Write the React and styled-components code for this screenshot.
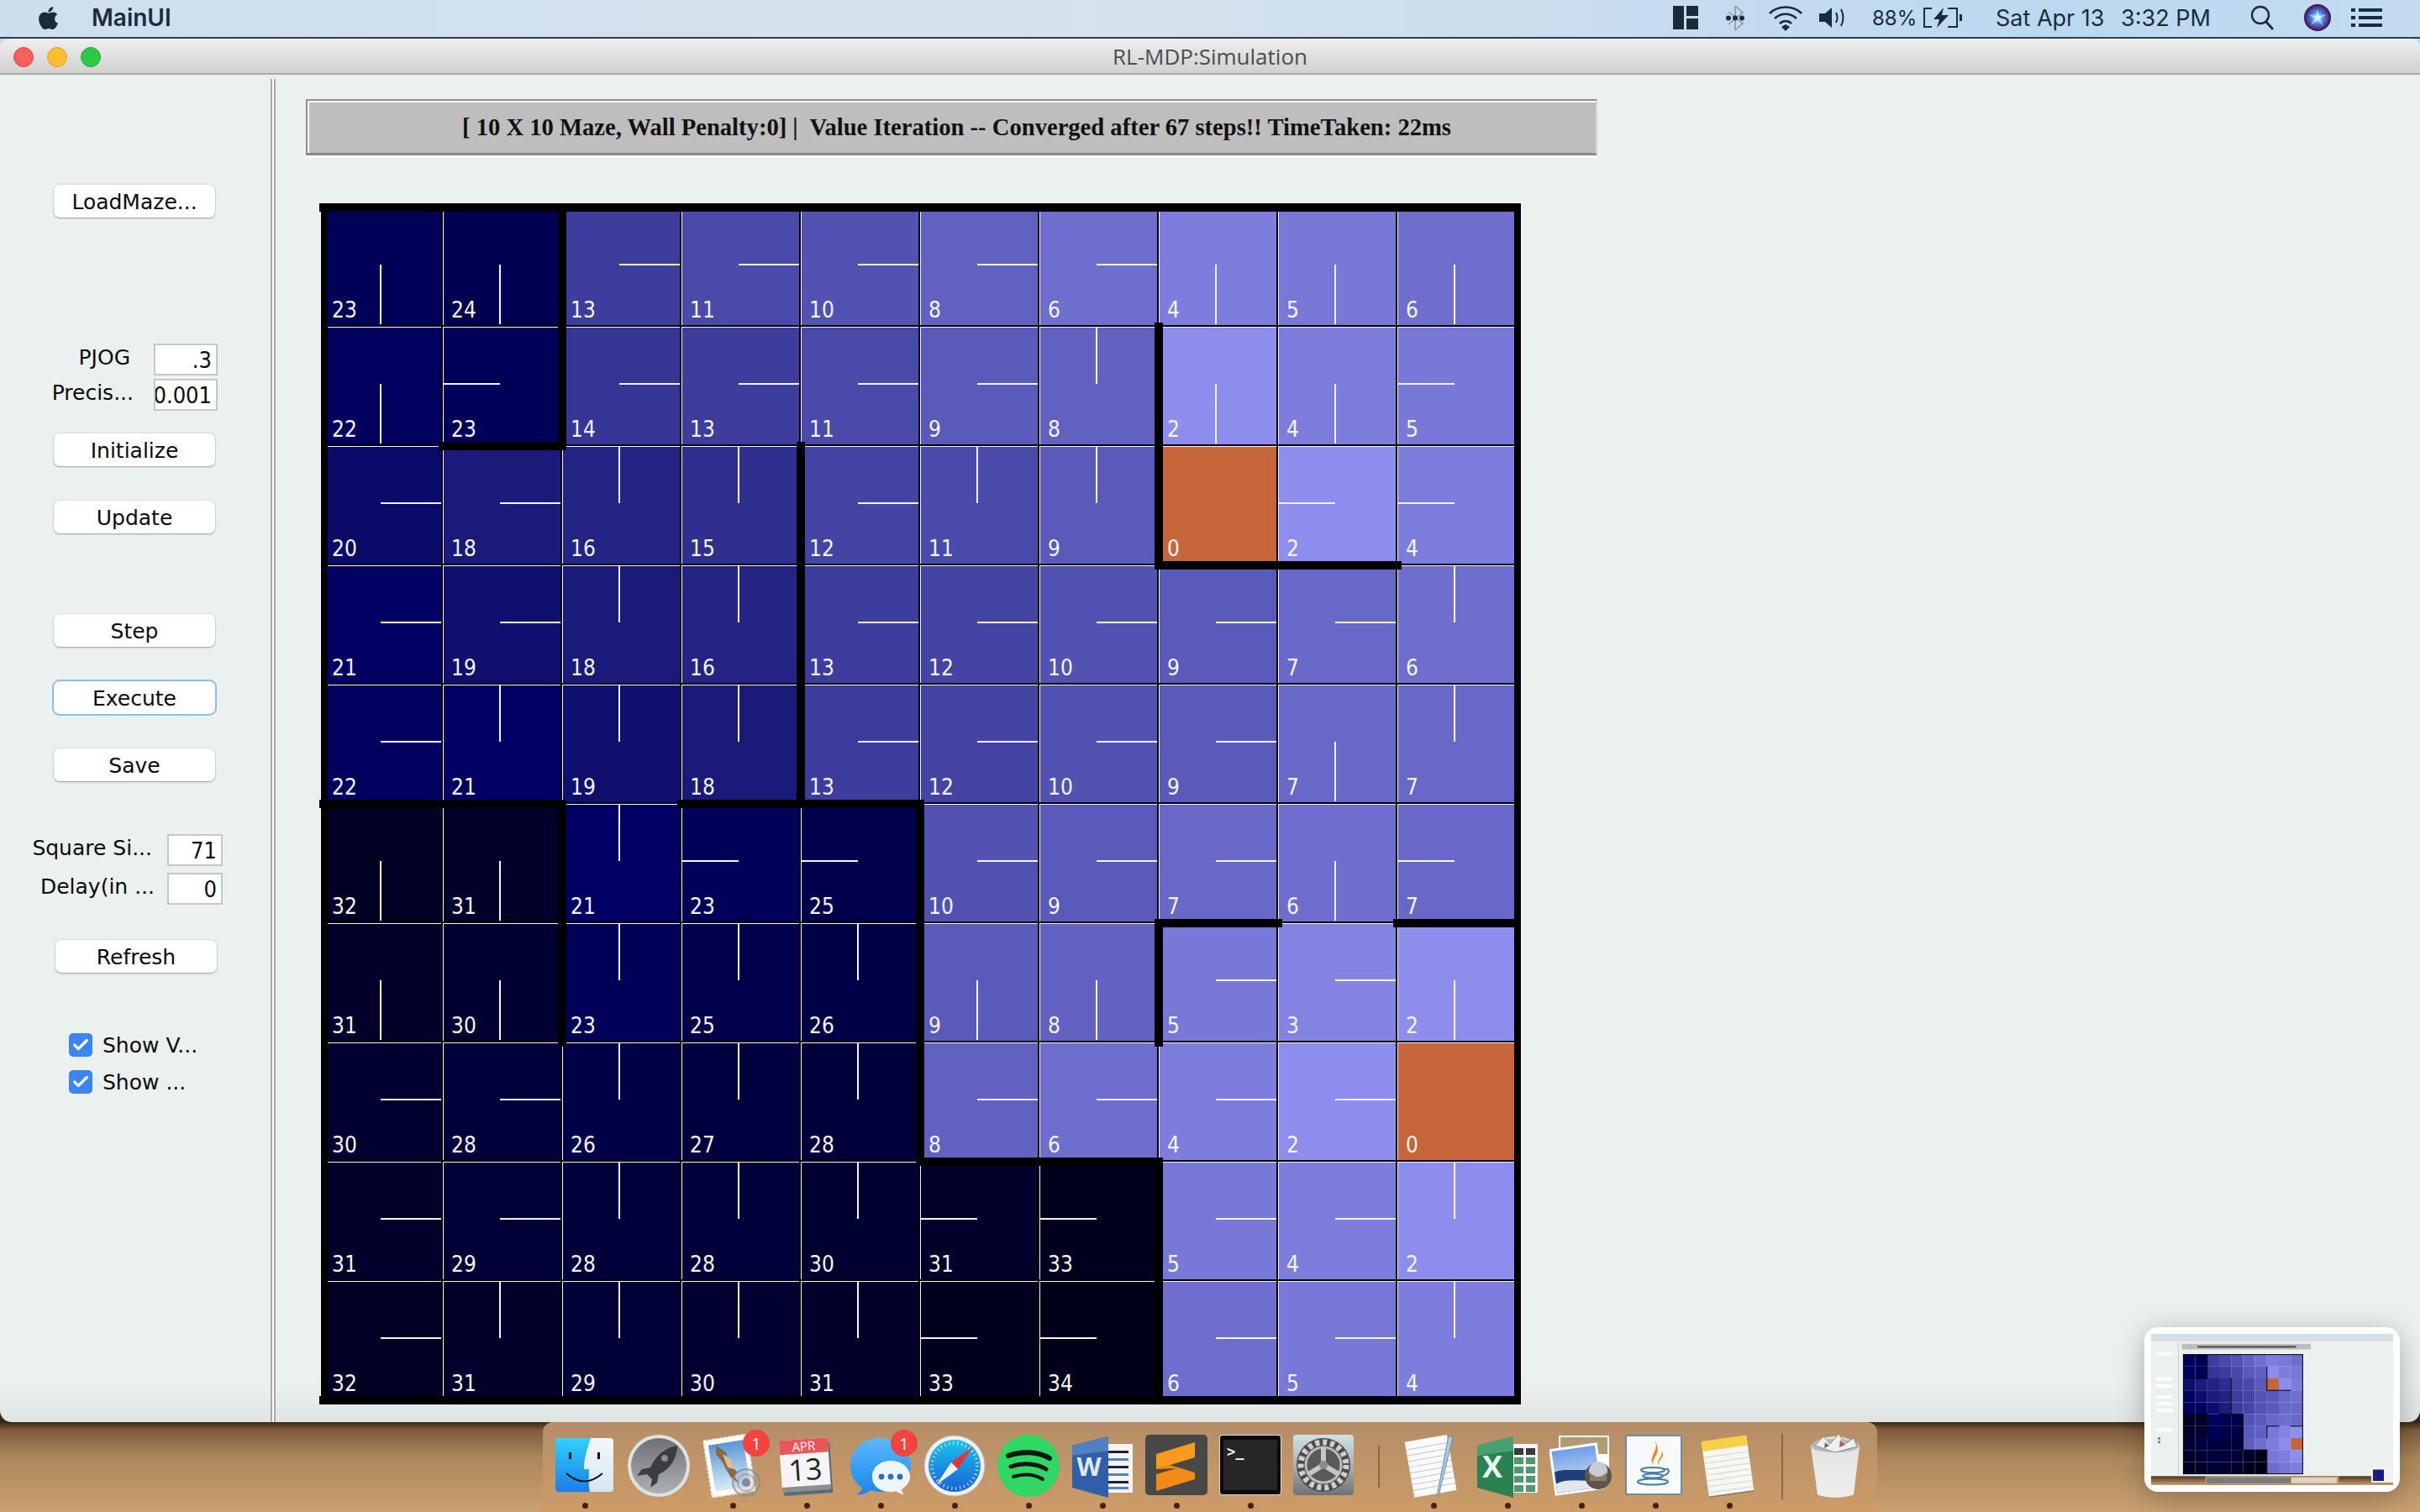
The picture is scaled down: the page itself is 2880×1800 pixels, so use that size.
import React from "react";
import styled, { createGlobalStyle } from "styled-components";
import { FaApple } from "react-icons/fa";
import { Check } from "lucide-react";

const GlobalStyle = createGlobalStyle`
  html, body {
    margin: 0;
    padding: 0;
    background: #3a2716;
  }
  * {
    box-sizing: border-box;
  }
`;

const UI_FONT = `"DejaVu Sans", "Open Sans", sans-serif`;
const MENU_FONT = `Inter, "Open Sans", sans-serif`;

const VALUES = [
  [23, 24, 13, 11, 10, 8, 6, 4, 5, 6],
  [22, 23, 14, 13, 11, 9, 8, 2, 4, 5],
  [20, 18, 16, 15, 12, 11, 9, 0, 2, 4],
  [21, 19, 18, 16, 13, 12, 10, 9, 7, 6],
  [22, 21, 19, 18, 13, 12, 10, 9, 7, 7],
  [32, 31, 21, 23, 25, 10, 9, 7, 6, 7],
  [31, 30, 23, 25, 26, 9, 8, 5, 3, 2],
  [30, 28, 26, 27, 28, 8, 6, 4, 2, 0],
  [31, 29, 28, 28, 30, 31, 33, 5, 4, 2],
  [32, 31, 29, 30, 31, 33, 34, 6, 5, 4],
];

const DIRS = [
  "DDRRRRRDDD",
  "DLRRRRUDDL",
  "RRUURUU.LL",
  "RRUURRRRRU",
  "RUUURRRRDU",
  "DDULLRRRDL",
  "DDUUUDDRRD",
  "RRUUURRRR.",
  "RRUUULLRRU",
  "RUUUULLRRU",
];

// [x1, y1, x2, y2, thickness, shift] in cell units, then pixels
const WALLS = [
  [0, 0, 10, 0, 10, 0],
  [0, 10, 10, 10, 10, 0],
  [0, 0, 0, 10, 8, 1],
  [10, 0, 10, 10, 8, 1],
  [2, 0, 2, 2, 10, 0],
  [1, 2, 2, 2, 10, 0],
  [4, 2, 4, 5, 10, 0],
  [7, 1, 7, 3, 10, 0],
  [7, 3, 9, 3, 10, 0],
  [0, 5, 2, 5, 10, 0],
  [3, 5, 5, 5, 10, 0],
  [2, 5, 2, 7, 10, 0],
  [5, 5, 5, 8, 10, 0],
  [5, 8, 7, 8, 10, 0],
  [7, 8, 7, 10, 10, 0],
  [7, 6, 7, 7, 10, 0],
  [7, 6, 8, 6, 10, 0],
  [9, 6, 10, 6, 10, 0],
];

const CELL = 142;

const cellColor = (v) => {
  if (v === 0) return "#c6653a";
  const table = {
    2: 141, 3: 131, 4: 125, 5: 120, 6: 110, 7: 104, 8: 97, 9: 90, 10: 82, 11: 74,
    12: 68, 13: 61, 14: 54, 15: 47, 16: 36, 18: 26, 19: 15, 20: 10,
  };
  if (table[v]) {
    const r = table[v];
    return `rgb(${r},${r},${r + 97})`;
  }
  return `rgb(0,0,${Math.round(100 - (v - 21) * 5.8)})`;
};

const Screen = styled.div`
  position: relative;
  width: 2880px;
  height: 1800px;
  overflow: hidden;
  display: flex;
  flex-direction: column;
  background: linear-gradient(#c8dcec 50%, #3a2716 50%);
`;

const MenuBar = styled.div`
  height: 46px;
  flex: none;
  display: flex;
  align-items: center;
  padding: 0 45px 2px 42px;
  background: linear-gradient(90deg, #cddfee 0%, #d6e2ec 45%, #bcd8f0 85%, #c2dbef 100%);
  border-bottom: 2px solid #2c3d4f;
  color: #1a2c3c;
  font-family: ${MENU_FONT};
`;

const AppName = styled.span`
  margin-left: 36px;
  font-size: 28px;
  font-weight: 600;
  width: 100px;
`;

const MenuSpacer = styled.div`
  flex: 1;
`;

const MenuItem = styled.div`
  flex: none;
  display: flex;
  align-items: center;
  width: ${(p) => p.$w}px;
  margin-left: ${(p) => p.$ml}px;
  font-size: ${(p) => p.$size || 27}px;
  white-space: nowrap;
`;

const Window = styled.div`
  flex: none;
  height: 1647px;
  display: flex;
  flex-direction: column;
  border-radius: 12px 12px 14px 14px;
  overflow: hidden;
  background: linear-gradient(#ebf1ef 97%, #dfe5e2 100%);
`;

const TitleBar = styled.div`
  position: relative;
  flex: none;
  height: 43px;
  padding-top: 1px;
  display: flex;
  align-items: center;
  justify-content: center;
  background: linear-gradient(#efefef, #d0d0d0);
  border-bottom: 2px solid #ababab;
  color: #4d4d4d;
  font-family: "Open Sans", sans-serif;
  font-size: 26px;
`;

const Lights = styled.div`
  position: absolute;
  left: 16px;
  top: 10px;
  display: flex;
  gap: 16px;
`;

const Light = styled.span`
  width: 24px;
  height: 24px;
  border-radius: 50%;
  background: ${(p) => p.$c};
  border: 1px solid ${(p) => p.$b};
`;

const Body = styled.div`
  flex: 1;
  display: flex;
  min-height: 0;
`;

const Sidebar = styled.div`
  width: 322px;
  flex: none;
  display: flex;
  flex-direction: column;
  font-family: ${UI_FONT};
  font-size: 25px;
  color: #0a0a0a;
`;

const Button = styled.button`
  flex: none;
  width: ${(p) => p.$w || 192}px;
  height: 39px;
  margin-top: ${(p) => p.$mt}px;
  margin-bottom: 1px;
  margin-left: ${(p) => p.$ml || 64}px;
  padding: 2px 0 0;
  background: #fff;
  border: none;
  border-radius: 7px;
  font: inherit;
  color: inherit;
  box-shadow: ${(p) =>
    p.$focus
      ? "0 0 0 2px #8dbcf0"
      : "0 1px 2px rgba(0,0,0,.3), 0 0 0 1px rgba(0,0,0,.06)"};
`;

const FieldRow = styled.div`
  flex: none;
  display: flex;
  justify-content: flex-end;
  align-items: center;
  width: ${(p) => p.$w}px;
  height: 38px;
  margin-top: ${(p) => p.$mt}px;
`;

const FieldLabel = styled.label`
  margin-right: ${(p) => p.$gap}px;
  margin-top: -5px;
  white-space: nowrap;
`;

const Field = styled.div`
  flex: none;
  width: ${(p) => p.$w}px;
  height: 38px;
  display: flex;
  justify-content: flex-end;
  align-items: center;
  padding-right: 5px;
  overflow: hidden;
  background: #fff;
  border: 2px solid #c6c8c8;
  font-size: 27px;
  font-stretch: condensed;
`;

const CheckRow = styled.div`
  flex: none;
  display: flex;
  align-items: center;
  gap: 12px;
  height: 28px;
  margin-top: ${(p) => p.$mt}px;
  margin-left: 82px;
`;

const CheckBox = styled.span`
  width: 28px;
  height: 28px;
  border-radius: 5px;
  background: #3b85f5;
  color: #fff;
  display: flex;
  align-items: center;
  justify-content: center;
`;

const Splitter = styled.div`
  flex: none;
  width: 6px;
  margin-top: 5px;
  border-left: 2px solid #a9a9a9;
  border-right: 2px solid #a9a9a9;
  background: #fff;
`;

const Content = styled.div`
  flex: 1;
  display: flex;
  flex-direction: column;
  align-items: flex-start;
  padding: 29px 0 0 36px;
`;

const StatusBar = styled.div`
  width: 1537px;
  height: 67px;
  padding: 2px 0 0 12px;
  display: flex;
  align-items: center;
  justify-content: center;
  background: #bebebe;
  border-top: 2px solid #8e8e8e;
  border-left: 2px solid #8e8e8e;
  border-right: 2px solid #d8d8d8;
  border-bottom: 3px solid #8a8a8a;
  box-shadow: inset 2px 2px 0 #fff, 0 3px 0 #fff;
  font-family: "Liberation Serif", serif;
  font-weight: 700;
  font-size: 28.6px;
  color: #111;
  white-space: pre;
`;

const Maze = styled.div`
  position: relative;
  margin: 60px 0 0 19px;
  width: ${CELL * 10}px;
  display: grid;
  grid-template-columns: repeat(10, ${CELL}px);
  grid-auto-rows: ${CELL}px;
`;

const Cell = styled.div`
  position: relative;
  display: flex;
  align-items: flex-end;
  padding: 0 0 3px 10px;
  background: ${(p) => p.$bg};
  border-top: 2px solid #000;
  border-left: 2px solid #000;
  box-shadow: inset 1px 1px 0 #f4f4f4;
  color: #f6f6f6;
  font-family: ${UI_FONT};
  font-stretch: condensed;
  font-size: 26px;
  line-height: 30px;
`;

const ARROWS = {
  R: "left: 68px; top: 67px; width: 72px; height: 2px;",
  L: "left: 0; top: 67px; width: 68px; height: 2px;",
  U: "left: 67px; top: 0; width: 2px; height: 68px;",
  D: "left: 67px; top: 68px; width: 2px; height: 71px;",
};

const Arrow = styled.span`
  position: absolute;
  background: #f4f4f4;
  ${(p) => ARROWS[p.$dir]}
`;

const Wall = styled.div`
  position: absolute;
  background: #000;
`;

const Desktop = styled.div`
  flex: 1;
  display: flex;
  justify-content: center;
  background: linear-gradient(#3a2716 0, #7d5c3c 9%, #ad875c 40%, #c9a172 100%);
`;

const Dock = styled.div`
  width: 1588px;
  display: flex;
  padding-left: 6px;
  border-radius: 12px 12px 0 0;
  background: linear-gradient(#b48e68, #cd9c68);
`;

const DockSlot = styled.div`
  position: relative;
  flex: none;
  width: 88px;
  display: flex;
  flex-direction: column;
  align-items: center;
  padding-top: 14px;
`;

const DockDot = styled.span`
  width: 7px;
  height: 7px;
  margin-top: 6px;
  border-radius: 50%;
  background: ${(p) => (p.$on ? "#4a2108" : "transparent")};
`;

const DockSep = styled.div`
  flex: none;
  width: ${(p) => p.$w}px;
  display: flex;
  justify-content: center;
  padding-top: ${(p) => p.$top}px;
`;

const SepLine = styled.span`
  width: 2px;
  height: ${(p) => p.$h}px;
  background: #90673e;
`;

const Badge = styled.span`
  position: absolute;
  top: 9px;
  left: 56px;
  width: 32px;
  height: 32px;
  border-radius: 50%;
  display: flex;
  align-items: center;
  justify-content: center;
  background: #f4423f;
  color: #fff;
  font-family: "Open Sans", sans-serif;
  font-size: 20px;
`;

const ThumbFrame = styled.div`
  position: absolute;
  left: 2552px;
  top: 1580px;
  width: 304px;
  height: 196px;
  padding: 8px;
  border-radius: 16px;
  background: #fff;
  box-shadow: 0 6px 34px rgba(0, 0, 0, 0.28);
`;

const ThumbSvg = styled.svg`
  display: block;
  width: 288px;
  height: 180px;
`;

const IconSvg = styled.svg`
  width: 76px;
  height: 76px;
  display: block;
`;

const Icon = ({ children }) => <IconSvg viewBox="0 0 76 76">{children}</IconSvg>;

const FinderIcon = () => (
  <Icon>
    <defs>
      <linearGradient id="fb" x1="0" y1="0" x2="0" y2="1">
        <stop offset="0" stopColor="#2ed2ff" />
        <stop offset="1" stopColor="#1c7ee6" />
      </linearGradient>
      <linearGradient id="fw" x1="0" y1="0" x2="0" y2="1">
        <stop offset="0" stopColor="#f6f8fb" />
        <stop offset="1" stopColor="#d6e6f4" />
      </linearGradient>
    </defs>
    <rect x="3" y="5" width="69" height="64" rx="4" fill="url(#fw)" />
    <path d="M7 5 H45 C40 20 37 30 37 42 H43 C43 52 42 60 44 69 H7 a4 4 0 0 1 -4 -4 V9 a4 4 0 0 1 4 -4 z" fill="url(#fb)" />
    <rect x="19" y="22" width="3" height="8" fill="#111" />
    <rect x="53" y="22" width="3" height="8" fill="#111" />
    <path d="M16 47 Q37 66 59 47" fill="none" stroke="#111" strokeWidth="2" />
  </Icon>
);

const LaunchpadIcon = () => (
  <Icon>
    <defs>
      <linearGradient id="lp" x1="0" y1="0" x2="0" y2="1">
        <stop offset="0" stopColor="#6f7174" />
        <stop offset="1" stopColor="#aeb1b3" />
      </linearGradient>
    </defs>
    <circle cx="38" cy="38" r="37" fill="#dfe2e2" />
    <circle cx="38" cy="38" r="33" fill="url(#lp)" />
    <path d="M60 14 C46 16 34 26 28 40 L18 42 L12 50 L24 48 L30 54 L28 64 L36 58 L38 48 C52 42 60 28 60 14 z" fill="#3b3d40" />
    <circle cx="45" cy="29" r="4" fill="#8b8e90" />
  </Icon>
);

const MailIcon = () => (
  <Icon>
    <defs>
      <linearGradient id="sky" x1="0" y1="0" x2="0" y2="1">
        <stop offset="0" stopColor="#5a95d8" />
        <stop offset="1" stopColor="#d9ecf8" />
      </linearGradient>
    </defs>
    <g transform="rotate(-9 34 38)">
      <rect x="8" y="4" width="52" height="68" fill="#fff" stroke="#e8e8e8" strokeDasharray="3 2" strokeWidth="2" />
      <rect x="13" y="10" width="42" height="56" fill="url(#sky)" />
    </g>
    <path d="M18 14 L30 22 L34 36 L44 46 L40 50 L46 60 L36 52 L30 42 L26 34 L18 24 z" fill="#8a6a3f" />
    <path d="M26 24 L36 30 L40 42 L32 40 z" fill="#d8c090" />
    <circle cx="54" cy="58" r="16" fill="rgba(150,150,160,.28)" stroke="#8a8a92" strokeWidth="1.5" />
    <circle cx="54" cy="58" r="10" fill="none" stroke="#8a8a92" strokeWidth="1" />
    <circle cx="54" cy="58" r="5" fill="#7c8aa0" />
  </Icon>
);

const CalendarIcon = () => (
  <Icon>
    <g transform="rotate(-4 38 38)">
      <rect x="9" y="12" width="58" height="60" fill="#5d6a74" />
      <rect x="7" y="6" width="58" height="60" fill="#f4f5f6" />
      <rect x="7" y="6" width="58" height="17" fill="#e8565a" />
      <rect x="7" y="62" width="58" height="6" fill="#8f8f8f" />
      <text x="36" y="20" textAnchor="middle" fontFamily="Open Sans, sans-serif" fontSize="15" fill="#fff">APR</text>
      <text x="36" y="55" textAnchor="middle" fontFamily="Open Sans, sans-serif" fontSize="35" fill="#222">13</text>
    </g>
  </Icon>
);

const MessagesIcon = () => (
  <Icon>
    <defs>
      <linearGradient id="mb" x1="0" y1="0" x2="0" y2="1">
        <stop offset="0" stopColor="#5ab8fb" />
        <stop offset="1" stopColor="#1a86ee" />
      </linearGradient>
    </defs>
    <path d="M36 5 C16 5 2 20 2 38 C2 50 8 59 16 64 C15 68 12 70 10 72 C16 73 22 70 26 67 C29 68 33 69 36 69 C58 69 74 54 74 37 C74 20 58 5 36 5 z" fill="url(#mb)" />
    <path d="M50 32 C36 32 28 41 28 51 C28 62 37 69 50 69 C52 69 54 69 56 68 C59 70 62 72 66 72 C64 70 63 68 63 66 C69 62 73 57 73 51 C73 41 64 32 50 32 z" fill="#eef5fc" />
    <circle cx="39" cy="51" r="3.4" fill="#2a6fc4" />
    <circle cx="50" cy="51" r="3.4" fill="#2a6fc4" />
    <circle cx="61" cy="51" r="3.4" fill="#2a6fc4" />
  </Icon>
);

const SafariIcon = () => (
  <Icon>
    <defs>
      <linearGradient id="sf" x1="0" y1="0" x2="0" y2="1">
        <stop offset="0" stopColor="#1bc3ea" />
        <stop offset="1" stopColor="#1a62d6" />
      </linearGradient>
    </defs>
    <circle cx="38" cy="38" r="36" fill="#f0f0f2" stroke="#b9b9bd" strokeWidth="1" />
    <circle cx="38" cy="38" r="31" fill="url(#sf)" />
    <circle cx="38" cy="38" r="27" fill="none" stroke="#d8ecf8" strokeWidth="4" strokeDasharray="1 4" />
    <path d="M60 15 L42 42 L34 34 z" fill="#e9323a" />
    <path d="M16 61 L34 34 L42 42 z" fill="#f1f1f1" />
  </Icon>
);

const SpotifyIcon = () => (
  <Icon>
    <circle cx="38" cy="38" r="37" fill="#2fd765" />
    <path d="M14 26 C30 20 50 21 63 29" fill="none" stroke="#191414" strokeWidth="6" strokeLinecap="round" />
    <path d="M17 39 C31 34 48 35 59 42" fill="none" stroke="#191414" strokeWidth="5" strokeLinecap="round" />
    <path d="M20 51 C32 47 45 48 55 54" fill="none" stroke="#191414" strokeWidth="4" strokeLinecap="round" />
  </Icon>
);

const WordIcon = () => (
  <Icon>
    <rect x="40" y="12" width="34" height="58" fill="#f3f4f6" />
    {[20, 29, 38, 47, 56, 63].map((y) => (
      <rect key={y} x="44" y={y} width="25" height="3" fill={y % 2 ? "#5a7fb8" : "#222"} />
    ))}
    <path d="M2 14 L45 3 V76 L2 64 z" fill="#2f5fa8" />
    <path d="M2 14 L45 3 V20 L2 26 z" fill="#4f80c4" />
    <text x="22" y="50" textAnchor="middle" fontFamily="Open Sans, sans-serif" fontWeight="700" fontSize="30" fill="#dfe9f6">W</text>
  </Icon>
);

const SublimeIcon = () => (
  <Icon>
    <rect x="1" y="1" width="74" height="72" rx="5" fill="#484848" />
    <path d="M60 10 L14 24 V42 L60 28 z" fill="#ff9a1f" />
    <path d="M14 42 L30 37 L60 46 V54 L14 68 V48 L38 41 z" fill="#f18a16" />
  </Icon>
);

const TerminalIcon = () => (
  <Icon>
    <rect x="1" y="1" width="74" height="72" rx="4" fill="#dcdcdc" />
    <rect x="2" y="2" width="72" height="70" rx="3" fill="#0b0b0b" />
    <rect x="6" y="7" width="64" height="60" fill="#262626" />
    <text x="10" y="27" fontFamily="DejaVu Sans Mono, monospace" fontWeight="700" fontSize="17" fill="#f2f2f2">&gt;_</text>
  </Icon>
);

const PrefsIcon = () => (
  <Icon>
    <defs>
      <linearGradient id="pr" x1="0" y1="0" x2="0" y2="1">
        <stop offset="0" stopColor="#cfe3e8" />
        <stop offset="0.5" stopColor="#a9b3b6" />
        <stop offset="1" stopColor="#6e7274" />
      </linearGradient>
    </defs>
    <rect x="1" y="1" width="72" height="72" rx="4" fill="url(#pr)" />
    <circle cx="37" cy="37" r="32" fill="#4c4c4c" />
    <circle cx="37" cy="37" r="27" fill="none" stroke="#d0d0d0" strokeWidth="7" strokeDasharray="5 4" />
    <circle cx="37" cy="37" r="21" fill="#5a5a5a" stroke="#bcbcbc" strokeWidth="3" />
    <path d="M37 37 V16 M37 37 L19 48 M37 37 L55 48" stroke="#c6c6c6" strokeWidth="6" />
    <circle cx="37" cy="37" r="5" fill="#8c8c8c" />
  </Icon>
);

const TextEditIcon = () => (
  <Icon>
    <g transform="rotate(-10 34 38)">
      <rect x="9" y="5" width="51" height="67" fill="#fbfbfb" />
      {[14, 21, 28, 35, 42, 49, 56, 63].map((y) => (
        <rect key={y} x="9" y={y} width="51" height="1" fill="#c4c4c8" />
      ))}
    </g>
    <path d="M56 2 L61 4 L44 74 L42 74 z" fill="#a9c8e2" stroke="#6f8ea8" strokeWidth="1" />
  </Icon>
);

const ExcelIcon = () => (
  <Icon>
    <rect x="40" y="12" width="34" height="58" fill="#f3f4f6" />
    {[0, 1, 2, 3, 4].map((i) => (
      <React.Fragment key={i}>
        <rect x="46" y={17 + i * 11} width="11" height="8" fill={i ? "#4f9872" : "#3a3a3a"} />
        <rect x="60" y={17 + i * 11} width="11" height="8" fill={i ? "#4f9872" : "#3a3a3a"} />
      </React.Fragment>
    ))}
    <path d="M2 14 L45 3 V76 L2 64 z" fill="#2a8152" />
    <path d="M2 14 L45 3 V20 L2 26 z" fill="#46a071" />
    <text x="20" y="52" textAnchor="middle" fontFamily="Open Sans, sans-serif" fontWeight="700" fontSize="36" fill="#e8f3ec">X</text>
  </Icon>
);

const PreviewIcon = () => (
  <Icon>
    <defs>
      <linearGradient id="pv" x1="0" y1="0" x2="0" y2="1">
        <stop offset="0" stopColor="#6d9ee8" />
        <stop offset="1" stopColor="#d8e6f6" />
      </linearGradient>
    </defs>
    <rect x="11" y="2" width="60" height="50" fill="#fff" />
    <rect x="13" y="4" width="56" height="20" fill="#b49a72" />
    <g transform="rotate(-8 32 44)">
      <rect x="3" y="14" width="58" height="56" fill="#fff" />
      <rect x="6" y="17" width="52" height="50" fill="url(#pv)" />
      <path d="M6 42 C20 38 30 46 58 44 V67 H6 z" fill="#1f3f78" />
      <path d="M6 56 C24 50 40 60 58 58 V67 H6 z" fill="#dfe8ee" />
    </g>
    <circle cx="58" cy="50" r="16" fill="#5b5550" />
    <circle cx="58" cy="44" r="11" fill="#c6ccd2" />
    <path d="M48 46 Q58 56 68 46 V56 H48 z" fill="#8e7a5e" />
  </Icon>
);

const JavaIcon = () => (
  <Icon>
    <rect x="3" y="2" width="66" height="70" rx="2" fill="#f8f9fa" stroke="#6f8aa4" strokeWidth="2" />
    <path d="M37 8 C44 20 28 26 36 38 C32 28 48 24 37 8 z" fill="#ee8a1e" />
    <path d="M45 20 C48 28 38 30 42 38 C40 30 52 28 45 20 z" fill="#ee8a1e" />
    <ellipse cx="35" cy="43" rx="14" ry="3" fill="none" stroke="#4a7ca4" strokeWidth="2" />
    <ellipse cx="35" cy="50" rx="12" ry="2.5" fill="none" stroke="#4a7ca4" strokeWidth="2" />
    <ellipse cx="35" cy="57" rx="18" ry="3.5" fill="none" stroke="#4a7ca4" strokeWidth="2" />
    <path d="M49 42 C56 40 56 48 46 50" fill="none" stroke="#4a7ca4" strokeWidth="2" />
  </Icon>
);

const NotesIcon = () => (
  <Icon>
    <g transform="rotate(-8 36 38)">
      <rect x="9" y="6" width="54" height="67" fill="#f6f6f2" />
      <rect x="9" y="5" width="54" height="12" fill="#f7d04a" />
      <rect x="9" y="71" width="54" height="2" fill="#8a7f4a" />
      {[24, 31, 38, 45, 52, 59, 66].map((y) => (
        <rect key={y} x="9" y={y} width="54" height="1" fill="#d2d2d2" />
      ))}
    </g>
  </Icon>
);

const TrashIcon = () => (
  <Icon>
    <defs>
      <linearGradient id="tr" x1="0" y1="0" x2="0" y2="1">
        <stop offset="0" stopColor="#dfe3e4" />
        <stop offset="1" stopColor="#eeeeec" />
      </linearGradient>
    </defs>
    <path d="M9 15 C20 -1 54 -1 67 15 L60 72 C50 77 26 77 17 72 z" fill="url(#tr)" />
    <ellipse cx="38" cy="14" rx="29" ry="8" fill="#b6b9ba" />
    <path d="M14 14 L24 3 L32 12 L42 0 L50 12 L60 5 L64 15 L38 22 z" fill="#eef0f2" stroke="#8c9094" strokeWidth="1" />
    <path d="M26 10 L31 14 L25 17 z" fill="#5c6c78" />
    <path d="M44 7 L50 13 L43 16 z" fill="#a65c58" />
  </Icon>
);

const DOCK_LEFT = [
  { C: FinderIcon, on: true },
  { C: LaunchpadIcon },
  { C: MailIcon, on: true, badge: 1 },
  { C: CalendarIcon, on: true },
  { C: MessagesIcon, on: true, badge: 1 },
  { C: SafariIcon, on: true },
  { C: SpotifyIcon, on: true },
  { C: WordIcon, on: true },
  { C: SublimeIcon, on: true },
  { C: TerminalIcon, on: true },
  { C: PrefsIcon },
];

const DOCK_RIGHT = [
  { C: TextEditIcon, on: true },
  { C: ExcelIcon, on: true },
  { C: PreviewIcon, on: true },
  { C: JavaIcon, on: true },
  { C: NotesIcon, on: true },
];

const DockItem = ({ item }) => (
  <DockSlot>
    <item.C />
    <DockDot $on={item.on} />
    {item.badge && <Badge>{item.badge}</Badge>}
  </DockSlot>
);

const BluetoothIcon = () => (
  <svg width="24" height="31" viewBox="0 0 24 31">
    <path d="M12 1 L21 9 L4 23 M12 30 L21 22 L4 8 M12 1 V30" fill="none" stroke="#8b99a6" strokeWidth="1.6" />
    <circle cx="4" cy="15.5" r="3" fill="#1a2c3c" />
    <circle cx="12" cy="15.5" r="3" fill="#1a2c3c" />
    <circle cx="20" cy="15.5" r="3" fill="#1a2c3c" />
  </svg>
);

const WifiIcon = () => (
  <svg width="42" height="32" viewBox="0 0 42 32">
    <path d="M2 11 C12 1 30 1 40 11" fill="none" stroke="#1a2c3c" strokeWidth="2.6" />
    <path d="M8 17 C15 10 27 10 34 17" fill="none" stroke="#1a2c3c" strokeWidth="2.6" />
    <path d="M14 23 C18 19 24 19 28 23" fill="none" stroke="#1a2c3c" strokeWidth="2.6" />
    <path d="M16 27 L21 24 L26 27 L21 32 z" fill="#1a2c3c" />
  </svg>
);

const SoundIcon = () => (
  <svg width="35" height="26" viewBox="0 0 35 26">
    <path d="M0 8 H7 L15 1 V25 L7 18 H0 z" fill="#1a2c3c" />
    <path d="M20 7 Q23 13 20 19 M26 3 Q31 13 26 23" fill="none" stroke="#1a2c3c" strokeWidth="2" />
  </svg>
);

const BatteryIcon = () => (
  <svg width="47" height="24" viewBox="0 0 47 24">
    <path d="M11 1 H2 V23 H11 M30 1 H41 V23 H30" fill="none" stroke="#1a2c3c" strokeWidth="2" />
    <path d="M25 0 L13 14 H20 L17 24 L31 9 H23 z" fill="#1a2c3c" />
    <rect x="44" y="8" width="3" height="8" fill="#1a2c3c" />
  </svg>
);

const SearchIcon = () => (
  <svg width="29" height="30" viewBox="0 0 29 30">
    <circle cx="12" cy="12" r="10" fill="none" stroke="#1a2c3c" strokeWidth="2.4" />
    <path d="M19 20 L27 29" stroke="#1a2c3c" strokeWidth="2.8" />
  </svg>
);

const SiriIcon = () => (
  <svg width="32" height="32" viewBox="0 0 32 32">
    <defs>
      <radialGradient id="siri">
        <stop offset="0" stopColor="#e8f6ff" />
        <stop offset="0.45" stopColor="#3d8fe0" />
        <stop offset="0.8" stopColor="#5c2f8e" />
        <stop offset="1" stopColor="#1b1b3a" />
      </radialGradient>
    </defs>
    <circle cx="16" cy="16" r="16" fill="url(#siri)" />
    <path d="M16 6 L18 14 L27 12 L19 17 L23 26 L16 19 L8 25 L13 17 L5 12 L14 14 z" fill="#ecf7ff" opacity=".6" />
  </svg>
);

const ListIcon = () => (
  <svg width="37" height="22" viewBox="0 0 37 22">
    {[0, 9, 18].map((y) => (
      <React.Fragment key={y}>
        <rect x="0" y={y} width="5" height="4" fill="#1a2c3c" />
        <rect x="9" y={y} width="28" height="4" fill="#1a2c3c" />
      </React.Fragment>
    ))}
  </svg>
);

const LayoutIcon = () => (
  <svg width="30" height="28" viewBox="0 0 30 28">
    <rect x="0" y="0" width="13" height="28" fill="#1a2c3c" />
    <rect x="16" y="0" width="14" height="12" fill="#1a2c3c" />
    <rect x="16" y="15" width="14" height="13" fill="#1a2c3c" />
  </svg>
);

const Thumbnail = () => (
  <ThumbSvg viewBox="0 0 2880 1800">
    <defs>
      <filter id="soft">
        <feGaussianBlur stdDeviation="5" />
      </filter>
      <linearGradient id="wood" x1="0" y1="0" x2="0" y2="1">
        <stop offset="0" stopColor="#4a3320" />
        <stop offset="1" stopColor="#c9a172" />
      </linearGradient>
    </defs>
    <g filter="url(#soft)">
      <rect width="2880" height="1800" fill="#ebf1ef" />
      <rect width="2880" height="45" fill="#cddfee" />
      <rect y="45" width="2880" height="44" fill="#dcdcdc" />
      <rect x="322" y="94" width="6" height="1600" fill="#bbb" />
      <rect x="364" y="118" width="1537" height="67" fill="#bebebe" />
      <rect x="551" y="142" width="1176" height="22" fill="#555" />
      {[220, 516, 596, 731, 811, 891, 1119].map((y) => (
        <rect key={y} x="64" y={y} width="192" height="40" fill="#fff" />
      ))}
      <rect x="82" y="1230" width="28" height="28" fill="#3b85f5" />
      <rect x="82" y="1274" width="28" height="28" fill="#3b85f5" />
      {VALUES.map((row, r) =>
        row.map((v, c) => (
          <rect key={`${r}-${c}`} x={384 + c * CELL} y={246 + r * CELL} width={CELL} height={CELL} fill={cellColor(v)} />
        ))
      )}
      {WALLS.map(([x1, y1, x2, y2], i) => (
        <rect
          key={i}
          x={384 + x1 * CELL - 5}
          y={246 + y1 * CELL - 5}
          width={(x2 - x1) * CELL + 10}
          height={(y2 - y1) * CELL + 10}
          fill="#000"
        />
      ))}
      <rect y="1693" width="2880" height="107" fill="url(#wood)" />
      <rect x="646" y="1693" width="1588" height="107" fill="#c09468" />
      <rect x="660" y="1710" width="1000" height="66" fill="#54708a" opacity=".7" />
      <rect x="1670" y="1710" width="540" height="66" fill="#e4e4dc" opacity=".8" />
      <rect x="2620" y="1590" width="260" height="180" fill="#f2f4f2" />
      <rect x="2640" y="1615" width="130" height="135" fill="#1d1d80" />
    </g>
  </ThumbSvg>
);

export default function App() {
  return (
    <Screen>
      <GlobalStyle />
      <MenuBar>
        <FaApple size={31} />
        <AppName>MainUI</AppName>
        <MenuSpacer />
        <MenuItem $w={30} $ml={0}><LayoutIcon /></MenuItem>
        <MenuItem $w={24} $ml={32}><BluetoothIcon /></MenuItem>
        <MenuItem $w={42} $ml={27}><WifiIcon /></MenuItem>
        <MenuItem $w={35} $ml={19}><SoundIcon /></MenuItem>
        <MenuItem $w={51} $ml={28} $size={24}>88%</MenuItem>
        <MenuItem $w={47} $ml={9}><BatteryIcon /></MenuItem>
        <MenuItem $w={132} $ml={40}>Sat Apr 13</MenuItem>
        <MenuItem $w={106} $ml={17}>3:32 PM</MenuItem>
        <MenuItem $w={29} $ml={48}><SearchIcon /></MenuItem>
        <MenuItem $w={32} $ml={35}><SiriIcon /></MenuItem>
        <MenuItem $w={37} $ml={24}><ListIcon /></MenuItem>
      </MenuBar>

      <Window>
        <TitleBar>
          <Lights>
            <Light $c="#fc5f5a" $b="#e2463f" />
            <Light $c="#fdbd2f" $b="#e0a028" />
            <Light $c="#2ec942" $b="#25a934" />
          </Lights>
          RL-MDP:Simulation
        </TitleBar>
        <Body>
          <Sidebar>
            <Button $mt={131}>LoadMaze...</Button>
            <FieldRow $w={259} $mt={149}>
              <FieldLabel $gap={28}>PJOG</FieldLabel>
              <Field $w={76}>.3</Field>
            </FieldRow>
            <FieldRow $w={259} $mt={4}>
              <FieldLabel $gap={24}>Precis...</FieldLabel>
              <Field $w={76}>0.001</Field>
            </FieldRow>
            <Button $mt={27}>Initialize</Button>
            <Button $mt={40}>Update</Button>
            <Button $mt={95}>Step</Button>
            <Button $mt={40} $focus>Execute</Button>
            <Button $mt={40}>Save</Button>
            <FieldRow $w={265} $mt={62}>
              <FieldLabel $gap={18}>Square Si...</FieldLabel>
              <Field $w={66}>71</Field>
            </FieldRow>
            <FieldRow $w={265} $mt={8}>
              <FieldLabel $gap={15}>Delay(in ...</FieldLabel>
              <Field $w={66}>0</Field>
            </FieldRow>
            <Button $mt={42} $ml={66}>Refresh</Button>
            <CheckRow $mt={71}>
              <CheckBox><Check size={22} strokeWidth={3.5} /></CheckBox>
              Show V...
            </CheckRow>
            <CheckRow $mt={16}>
              <CheckBox><Check size={22} strokeWidth={3.5} /></CheckBox>
              Show ...
            </CheckRow>
          </Sidebar>
          <Splitter />
          <Content>
            <StatusBar>[ 10 X 10 Maze, Wall Penalty:0] |  Value Iteration -- Converged after 67 steps!! TimeTaken: 22ms</StatusBar>
            <Maze>
              {VALUES.map((row, r) =>
                row.map((v, c) => (
                  <Cell key={`${r}-${c}`} $bg={cellColor(v)}>
                    {DIRS[r][c] !== "." && <Arrow $dir={DIRS[r][c]} />}
                    {v}
                  </Cell>
                ))
              )}
              {WALLS.map(([x1, y1, x2, y2, t, shift], i) => (
                <Wall
                  key={i}
                  style={{
                    left: x1 * CELL + 2 - t / 2 + shift,
                    top: y1 * CELL + 2 - t / 2,
                    width: (x2 - x1) * CELL + t,
                    height: (y2 - y1) * CELL + t,
                  }}
                />
              ))}
            </Maze>
          </Content>
        </Body>
      </Window>

      <Desktop>
        <Dock>
          {DOCK_LEFT.map((item, i) => <DockItem key={i} item={item} />)}
          <DockSep $w={42} $top={28}><SepLine $h={50} /></DockSep>
          {DOCK_RIGHT.map((item, i) => <DockItem key={i} item={item} />)}
          <DockSep $w={38} $top={14}><SepLine $h={78} /></DockSep>
          <DockItem item={{ C: TrashIcon }} />
        </Dock>
      </Desktop>

      <ThumbFrame>
        <Thumbnail />
      </ThumbFrame>
    </Screen>
  );
}
